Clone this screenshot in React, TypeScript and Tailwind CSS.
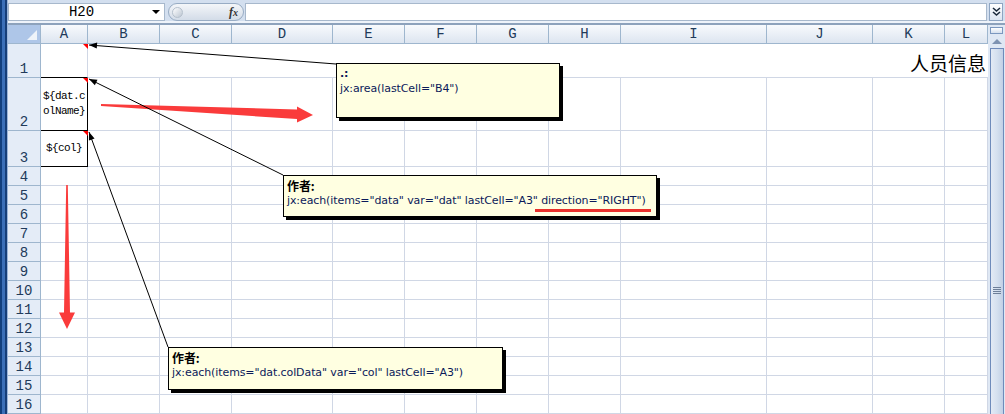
import type { ReactNode } from 'react'

const COLS = ['A', 'B', 'C', 'D', 'E', 'F', 'G', 'H', 'I', 'J', 'K', 'L']
const ROW_COUNT = 16

const mono = { fontFamily: '"Liberation Mono", "DejaVu Sans Mono", monospace' }
const tip = { fontFamily: '"DejaVu Sans", "Noto Sans CJK SC", sans-serif' }
const cjk = { fontFamily: '"Noto Sans CJK SC", sans-serif' }

// small arrowhead on the end of a comment connector, pointing at (x1, y1)
const head = (x1: number, y1: number, x2: number, y2: number) => {
  const len = Math.hypot(x2 - x1, y2 - y1)
  const ux = (x2 - x1) / len
  const uy = (y2 - y1) / len
  const bx = x1 + ux * 8
  const by = y1 + uy * 8
  return `${x1},${y1} ${bx - uy * 3},${by + ux * 3} ${bx + uy * 3},${by - ux * 3}`
}

const connectors = [
  { x1: 89, y1: 45, x2: 336, y2: 64 },
  { x1: 89, y1: 79, x2: 283, y2: 175 },
  { x1: 89, y1: 132, x2: 168, y2: 347 },
]

const FormulaBar = () => (
  <div className="flex h-[25px] flex-col bg-[#d3dfef]">
    <div className="flex h-[21px] items-stretch pt-[3px] pr-[2px]">
      <div className="flex w-[157px] items-center border border-[#a7b8cc] bg-white">
        <span className="flex-1 pl-[2px] text-center text-[14px] text-black" style={mono}>
          H20
        </span>
        <span className="mr-[4px] h-0 w-0 border-x-[4px] border-t-[4px] border-x-transparent border-t-black" />
      </div>
      <div className="ml-[3px] flex w-[76px] items-center justify-between rounded-full border border-[#98acc4] bg-linear-to-b from-[#f4f6f9] to-[#d3dce8] px-[3px]">
        <span className="h-[11px] w-[11px] rounded-full border border-[#b5c0cc] bg-linear-to-br from-[#ffffff] to-[#bcc6d2]" />
        <span className="mr-[2px] text-[12px] font-bold italic text-[#333]" style={{ fontFamily: '"Liberation Serif", serif' }}>
          f<span className="text-[10px]">x</span>
        </span>
      </div>
      <div className="ml-[1px] flex-1 border border-[#a7b8cc] bg-white" />
      <div className="ml-[2px] flex w-[14px] items-center justify-center border border-[#8ea5c2] bg-linear-to-b from-[#ffffff] to-[#dbe5f2]">
        <svg width="9" height="10" viewBox="0 0 9 10">
          <path d="M1 1 L4.5 4 L8 1 M1 5 L4.5 8 L8 5" stroke="#1b2a3c" strokeWidth="1.6" fill="none" />
        </svg>
      </div>
    </div>
    <div className="h-[4px] border-b-2 border-[#8da2bc] bg-[#eef3fa]" />
  </div>
)

const Scrollbar = () => (
  <div className="flex w-[17px] flex-col bg-[#dfe8f4] px-[1px]">
    <div className="mt-[2px] ml-[1px] h-[7px] w-[13px] border border-[#7c98bf] bg-linear-to-b from-[#ffffff] to-[#d5e0ee]" />
    <div className="flex h-[14px] items-center justify-center">
      <span className="h-0 w-0 border-x-[5px] border-b-[5px] border-x-transparent border-b-[#7e93b2]" />
    </div>
    <div className="ml-[1px] flex w-[14px] flex-1 flex-col items-center border-x border-t border-[#6f8bbb] bg-linear-to-r from-[#e3eaf5] via-[#d5e0ef] to-[#c2d0e6] pt-[238px]">
      <div className="flex w-[8px] flex-col gap-[1px]">
        <span className="h-px bg-[#6e7f99]" />
        <span className="h-px bg-[#6e7f99]" />
        <span className="h-px bg-[#6e7f99]" />
        <span className="h-px bg-[#6e7f99]" />
      </div>
    </div>
  </div>
)

const Cell = ({ r, c }: { r: number; c: string }) => {
  if (c === 'A' && r === 2) {
    return (
      <div
        className="flex flex-col items-center justify-center border-r border-b border-black bg-white text-[11px] leading-[15px] tracking-[-0.6px] text-black"
        style={mono}
      >
        <span>{'${dat.c'}</span>
        <span>{'olName}'}</span>
      </div>
    )
  }
  if (c === 'A' && r === 3) {
    return (
      <div
        className="flex items-center justify-center border-r border-b border-black bg-white text-[11px] tracking-[-0.6px] text-black"
        style={mono}
      >
        {'${col}'}
      </div>
    )
  }
  return <div className="border-r border-b border-[#d0d7e5] bg-white" />
}

const Row = ({ r }: { r: number }) => (
  <>
    <div
      className="flex items-end justify-center border-r border-b border-[#9eb6ce] bg-[#e4ecf7] text-[14px] leading-[16px] text-[#213a5a]"
      style={mono}
    >
      {r}
    </div>
    {r === 1 ? (
      <>
        <div className="border-r border-b border-r-[#d0d7e5] border-b-black bg-white" />
        <div
          className="col-span-11 flex items-end justify-end border-b border-[#d0d7e5] bg-white pr-[2px] pb-[4px] text-[19px] leading-[20px] text-black"
          style={cjk}
        >
          人员信息
        </div>
      </>
    ) : (
      COLS.map((c) => <Cell key={c} r={r} c={c} />)
    )}
  </>
)

const Sheet = () => (
  <div className="grid w-[980px] grid-cols-[33px_47px_72px_72px_101px_72px_72px_72px_72px_146px_106px_72px_43px] grid-rows-[19px_34px_53px_36px_repeat(13,19px)] overflow-hidden">
    <div className="relative border-r border-b border-[#9eb6ce] bg-[#aec6e8]">
      <svg className="absolute right-[3px] bottom-[3px]" width="10" height="10">
        <polygon points="10,0 10,10 0,10" fill="#eef3f9" />
      </svg>
    </div>
    {COLS.map((c) => (
      <div
        key={c}
        className="flex items-center justify-center border-r border-b border-[#9eb6ce] bg-linear-to-b from-[#f8fafd] to-[#dde5f0] text-[14px] text-[#213a5a]"
        style={mono}
      >
        {c}
      </div>
    ))}
    {Array.from({ length: ROW_COUNT }, (_, i) => (
      <Row key={i} r={i + 1} />
    ))}
  </div>
)

const Comment = ({ className, children }: { className: string; children: ReactNode }) => (
  <div
    className={`absolute border border-black bg-[#ffffe1] px-[3px] pt-[2px] text-[11px] leading-[15px] tracking-[-0.1px] text-[#0b1a5a] shadow-[3px_3px_0_#000] ${className}`}
    style={tip}
  >
    {children}
  </div>
)

const App = () => {
  return (
    <div className="relative flex h-[414px] w-[1005px] overflow-hidden bg-white">
      <div className="flex w-[8px] shrink-0">
        <span className="w-[2px] bg-[#123f7d]" />
        <span className="w-[3px] bg-[#3b6fb8]" />
        <span className="w-[2px] bg-[#163e78]" />
        <span className="w-[1px] bg-[#9cb6da]" />
      </div>

      <div className="flex flex-1 flex-col">
        <FormulaBar />
        <div className="flex flex-1">
          <Sheet />
          <Scrollbar />
        </div>
      </div>

      <svg className="pointer-events-none absolute inset-0" width="1005" height="414">
        <polygon points="83,44 88,44 88,49" fill="#ff0000" />
        <polygon points="83,78 88,78 88,83" fill="#ff0000" />
        <polygon points="83,131 88,131 88,136" fill="#ff0000" />

        <polygon points="101,104 297,109.5 297,106.5 313,115 297,122.5 297,119 101,106" fill="#fa3b3b" />
        <polygon points="66.2,185 67.8,185 70,312.5 75,312.5 67,329 59,312.5 64,312.5" fill="#fa3b3b" />

        {connectors.map((l, i) => (
          <g key={i}>
            <line x1={l.x1} y1={l.y1} x2={l.x2} y2={l.y2} stroke="#000" strokeWidth="1" />
            <polygon points={head(l.x1, l.y1, l.x2, l.y2)} fill="#000" />
          </g>
        ))}
      </svg>

      <Comment className="top-[63px] left-[336px] h-[55px] w-[224px]">
        <div className="font-bold">.:</div>
        <div>jx:area(lastCell="B4")</div>
      </Comment>

      <Comment className="top-[175px] left-[283px] h-[42px] w-[374px]">
        <div className="text-[12px] font-bold text-black" style={cjk}>
          作者:
        </div>
        <div className="whitespace-nowrap">jx:each(items="data" var="dat" lastCell="A3" direction="RIGHT")</div>
        <span className="absolute top-[33px] left-[251px] h-[3px] w-[116px] bg-[#e8302b]" />
      </Comment>

      <Comment className="top-[347px] left-[168px] h-[43px] w-[335px]">
        <div className="text-[12px] font-bold text-black" style={cjk}>
          作者:
        </div>
        <div className="whitespace-nowrap">jx:each(items="dat.colData" var="col" lastCell="A3")</div>
      </Comment>
    </div>
  )
}

export default App
